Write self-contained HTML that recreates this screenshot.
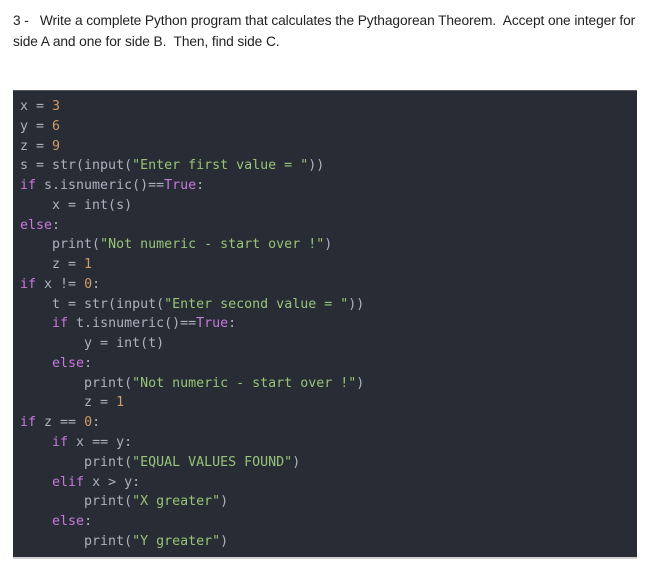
<!DOCTYPE html>
<html><head><style>
body{margin:0;background:#fff;width:647px;height:567px;overflow:hidden;position:relative}
.hd{position:absolute;left:13px;top:10px;font-family:"Liberation Sans",sans-serif;font-size:13.75px;line-height:21px;color:#222;white-space:pre;letter-spacing:-0.1px}
.code{position:absolute;left:13px;top:90px;width:624px;height:468px;background:#282c34;border-top:1px solid #555a62;box-sizing:border-box}
pre{margin:0;position:absolute;left:7px;top:6px;font-family:"DejaVu Sans Mono",monospace;font-size:13.3px;line-height:19.77px;color:#abb2bf}
.n{color:#d19a66}.s{color:#98c379}.k{color:#c678dd}
.bot{position:absolute;left:13px;top:557px;width:624px;height:2px;background:#d0d0d0}
</style></head><body>
<div class="hd">3 -   Write a complete Python program that calculates the Pythagorean Theorem.  Accept one integer for
side A and one for side B.  Then, find side C.</div>
<div class="code"><pre>x = <span class="n">3</span>
y = <span class="n">6</span>
z = <span class="n">9</span>
s = str(input(<span class="s">"Enter first value = "</span>))
<span class="k">if</span> s.isnumeric()==<span class="k">True</span>:
    x = int(s)
<span class="k">else</span>:
    print(<span class="s">"Not numeric - start over !"</span>)
    z = <span class="n">1</span>
<span class="k">if</span> x != <span class="n">0</span>:
    t = str(input(<span class="s">"Enter second value = "</span>))
    <span class="k">if</span> t.isnumeric()==<span class="k">True</span>:
        y = int(t)
    <span class="k">else</span>:
        print(<span class="s">"Not numeric - start over !"</span>)
        z = <span class="n">1</span>
<span class="k">if</span> z == <span class="n">0</span>:
    <span class="k">if</span> x == y:
        print(<span class="s">"EQUAL VALUES FOUND"</span>)
    <span class="k">elif</span> x &gt; y:
        print(<span class="s">"X greater"</span>)
    <span class="k">else</span>:
        print(<span class="s">"Y greater"</span>)</pre></div>
<div class="bot"></div>
</body></html>
